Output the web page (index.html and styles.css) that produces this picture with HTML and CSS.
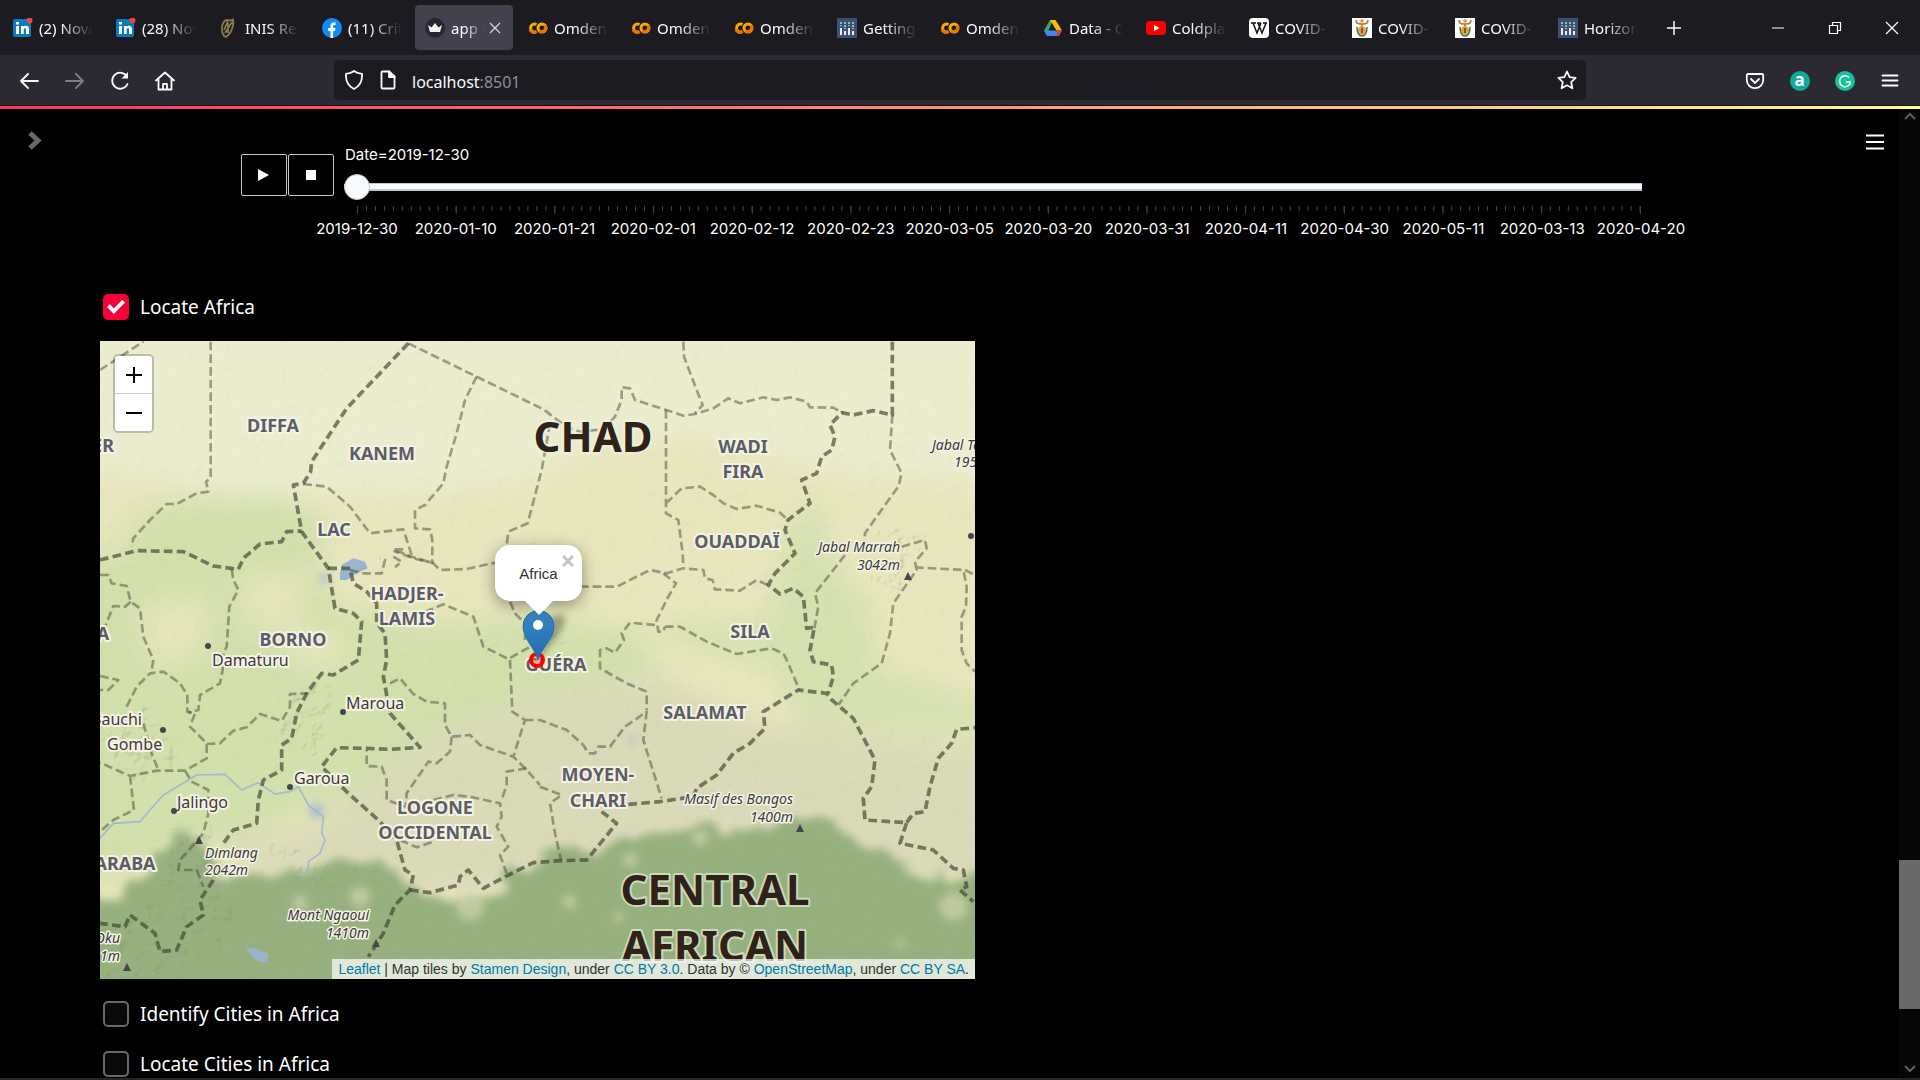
FILE: index.html
```html
<!DOCTYPE html>
<html lang="en">
<head>
<meta charset="utf-8">
<title>app · Streamlit</title>
<link rel="stylesheet" href="styles.css">
</head>
<body>
<svg class="defs" aria-hidden="true">
  <symbol id="i-linkedin" viewBox="0 0 20 20"><rect y="1" width="18" height="18" rx="2" fill="#0a7bbd"/><path d="M3 8h3v8H3zM3 4h3v2.500H3zM8 8h2.700v1.200C11.500 7.300 16 7 16 11v5h-3v-4.500c0-1.800-2.300-1.700-2.300 0V16H8z" fill="#fff"/><circle cx="16.500" cy="2.500" r="3" fill="#e8453c"/></symbol>
  <symbol id="i-harp" viewBox="0 0 20 20"><path d="M5 18C1 12 3 3 8 2c2 0 3 1.500 6-.5C15 7 13 15 7 19zM6 15 13 4M5 12l4-9M9 15V5" fill="none" stroke="#8d7a4c" stroke-width="1.800"/></symbol>
  <symbol id="i-facebook" viewBox="0 0 20 20"><circle cx="10" cy="10" r="10" fill="#0f8cf5"/><path d="M8.500 20v-7H6v-3h2.500V8c0-3 2-4 5-3.600V7c-2 0-2.400.2-2.400 1.500V10h2.400l-.5 3h-1.900v7z" fill="#fff"/></symbol>
  <symbol id="i-crown" viewBox="0 0 20 20"><circle cx="10" cy="10" r="10" fill="#262730"/><path d="m3 7 3.500 2.500L10 5l3.500 4.500L17 7l-2 7H5z" fill="#f2f2f2"/></symbol>
  <symbol id="i-colab" viewBox="0 0 20 20"><path d="M8.500 6.500a4 4 0 1 0 0 7" fill="none" stroke="#f9ab00" stroke-width="3"/><circle cx="14" cy="10" r="4" fill="none" stroke="#f9ab00" stroke-width="3"/><path d="M11.200 12.800a4 4 0 0 0 5.600-5.600M2 11.500A4 4 0 0 0 8.500 13.500" fill="none" stroke="#e8710a" stroke-width="3"/></symbol>
  <symbol id="i-plotly" viewBox="0 0 20 20"><path fill="#3f4f75" d="M0 0h20v20H0z"/><path d="M4 10v7M8 13v4M12 10v7M16 13v4" stroke="#e8ecf2" stroke-width="2"/><path d="M4 4v4M8 4v7M12 4v4M16 4v7" stroke="#7fc6b8" stroke-width="2" stroke-dasharray="2 1"/></symbol>
  <symbol id="i-drive" viewBox="0 0 20 20"><path fill="#34a853" d="M7 2h3l-6.500 15L1 12.500z"/><path fill="#fbbc04" d="M7 2h5.500L19 12.500h-5.500z"/><path fill="#4285f4" d="M1 12.500h12.500L15 18H4z"/><path fill="#ea4335" d="M13.500 12.500H19L16 18h-1z"/></symbol>
  <symbol id="i-youtube" viewBox="0 0 20 20"><rect y="3" width="20" height="14" rx="4" fill="#f00"/><path fill="#fff" d="m8 7 5.500 3L8 13z"/></symbol>
  <symbol id="i-wiki" viewBox="0 0 20 20"><rect width="20" height="20" rx="4" fill="#fff"/><path d="M2 5h5M8 5h4M14 5h4M4 5l4 10 4-10M9 5l4 10 4-10" fill="none" stroke="#111" stroke-width="1.500"/></symbol>
  <symbol id="i-arms" viewBox="0 0 20 20"><path fill="#fff" d="M0 0h20v20H0z"/><path d="M4 2c0 4 3 4 6 4s6 0 6-4M10 6v4" fill="none" stroke="#b07a30" stroke-width="1.600"/><circle cx="10" cy="3" r="1.800" fill="#f08a24"/><ellipse cx="10" cy="12.500" rx="4" ry="4.500" fill="#d9a441"/><path d="M5 9c0 7 2 9 5 9s5-2 5-9" fill="none" stroke="#3f7a45" stroke-width="1.500"/><path d="M9 10h2v5H9z" fill="#b5402c"/></symbol>
</svg>

<header class="browser">
  <div class="tabstrip">
    <div class="tab"><svg class="fav"><use href="#i-linkedin"/></svg><span class="tab-title">(2) Novat</span></div>
    <div class="tab"><svg class="fav"><use href="#i-linkedin"/></svg><span class="tab-title">(28) Nova</span></div>
    <div class="tab"><svg class="fav"><use href="#i-harp"/></svg><span class="tab-title">INIS Regi</span></div>
    <div class="tab"><svg class="fav"><use href="#i-facebook"/></svg><span class="tab-title">(11) Critic</span></div>
    <div class="tab tab-active"><svg class="fav"><use href="#i-crown"/></svg><span class="tab-title">app · St</span><button class="tab-close" aria-label="Close tab"><svg viewBox="0 0 12 12" width="12" height="12"><path d="m1 1 10 10M11 1 1 11" stroke="#d8d8dc" stroke-width="1.300"/></svg></button></div>
    <div class="tab"><svg class="fav"><use href="#i-colab"/></svg><span class="tab-title">Omdena</span></div>
    <div class="tab"><svg class="fav"><use href="#i-colab"/></svg><span class="tab-title">Omdena</span></div>
    <div class="tab"><svg class="fav"><use href="#i-colab"/></svg><span class="tab-title">Omdena</span></div>
    <div class="tab"><svg class="fav"><use href="#i-plotly"/></svg><span class="tab-title">Getting</span></div>
    <div class="tab"><svg class="fav"><use href="#i-colab"/></svg><span class="tab-title">Omdena</span></div>
    <div class="tab"><svg class="fav"><use href="#i-drive"/></svg><span class="tab-title">Data - Go</span></div>
    <div class="tab"><svg class="fav"><use href="#i-youtube"/></svg><span class="tab-title">Coldplay</span></div>
    <div class="tab"><svg class="fav"><use href="#i-wiki"/></svg><span class="tab-title">COVID-19</span></div>
    <div class="tab"><svg class="fav"><use href="#i-arms"/></svg><span class="tab-title">COVID-19</span></div>
    <div class="tab"><svg class="fav"><use href="#i-arms"/></svg><span class="tab-title">COVID-19</span></div>
    <div class="tab"><svg class="fav"><use href="#i-plotly"/></svg><span class="tab-title">Horizont</span></div>
    <button class="new-tab" aria-label="New tab"><svg viewBox="0 0 16 16" width="16" height="16"><path d="M8 1v14M1 8h14" stroke="#fbfbfe" stroke-width="1.500"/></svg></button>
    <div class="win">
      <button aria-label="Minimize"><svg viewBox="0 0 14 14" width="14" height="14"><path d="M1 7h12" stroke="#fff"/></svg></button>
      <button aria-label="Restore"><svg viewBox="0 0 14 14" width="14" height="14"><path d="M1.500 4.500h8v8h-8zM4.500 4V1.500h8v8H10" fill="none" stroke="#fff" stroke-width="1.200"/></svg></button>
      <button aria-label="Close window"><svg viewBox="0 0 14 14" width="14" height="14"><path d="m1 1 12 12M13 1 1 13" stroke="#fff" stroke-width="1.200"/></svg></button>
    </div>
  </div>
  <div class="toolbar">
    <button class="tool" aria-label="Back"><svg viewBox="0 0 20 20" width="20" height="20"><path d="M18 10H1m7-7-7 7 7 7"/></svg></button>
    <button class="tool tool-off" aria-label="Forward" disabled><svg viewBox="0 0 20 20" width="20" height="20"><path d="M1 10h17m-7-7 7 7-7 7"/></svg></button>
    <button class="tool" aria-label="Reload"><svg viewBox="0 0 20 20" width="20" height="20"><path d="M17.500 13A8 8 0 1 1 17 5.500"/><path d="M18 1v6.500h-6.500z" fill="#fbfbfe" stroke="none"/></svg></button>
    <button class="tool" aria-label="Home"><svg viewBox="0 0 20 20" width="20" height="20"><path d="m1 9.500 9-8 9 8M3.500 8v10.500h13V8M8 18v-5h4v5"/></svg></button>
    <div class="urlbar">
      <svg viewBox="0 0 20 20" width="20" height="20"><path d="M10 1c2.500 2 5 2.500 8 2.800C18.500 11 16 16 10 19 4 16 1.500 11 2 3.800 5 3.500 7.500 3 10 1z"/></svg>
      <svg viewBox="0 0 20 20" width="20" height="20"><path d="M3.500 2.500q0-1 1-1H11l5.500 5v11q0 1-1 1h-11q-1 0-1-1z"/><path d="M11 1.500V7h5.500z" fill="#fbfbfe"/></svg>
      <span class="url">localhost<span class="port">:8501</span></span>
      <button class="star" aria-label="Bookmark this page"><svg viewBox="0 0 20 20" width="20" height="20"><path d="m10 1.500 2.600 5.700 6 .7-4.400 4.200 1.200 6.200-5.400-3-5.400 3 1.200-6.200L1.400 7.900l6-.7z"/></svg></button>
    </div>
    <button class="tool" aria-label="Save to Pocket"><svg viewBox="0 0 20 20" width="20" height="20"><path d="M3 3h14q1.200 0 1.200 1.200V9a8.200 8.200 0 0 1-16.400 0V4.200Q1.800 3 3 3zM6 8l4 4 4-4"/></svg></button>
    <button class="tool" aria-label="Alexa extension"><span class="ext ext-a">a</span></button>
    <button class="tool" aria-label="Grammarly extension"><svg viewBox="0 0 20 20" width="20" height="20"><circle cx="10" cy="10" r="10" fill="#15c39a" stroke="none"/><path d="M13.500 6A5.500 5.500 0 1 0 15.500 11h-4" stroke-width="1.600"/></svg></button>
    <button class="tool" aria-label="Application menu"><svg viewBox="0 0 20 20" width="20" height="20"><path d="M2.500 4.500h15M2.500 9.500h15M2.500 14.500h15"/></svg></button>
  </div>
</header>
<div class="decoration"></div>

<div class="app">
  <div class="gutter"><button class="expand" aria-label="Open sidebar"><svg viewBox="0 0 14 20" width="14" height="20"><path d="m2 2 8 7.500L2 17" fill="none" stroke="#696969" stroke-width="5"/></svg></button></div>
  <main class="content">
    <section class="player">
      <div class="play-buttons">
        <button class="play" aria-label="Play"><svg viewBox="0 0 12 12" width="12" height="12"><path d="M0 0v12l11-6z" fill="#fff"/></svg></button>
        <button class="play" aria-label="Stop"><svg viewBox="0 0 12 12" width="12" height="12"><path d="M1 1h10v10H1z" fill="#fff"/></svg></button>
      </div>
      <div class="timeline">
        <label class="date" for="date">Date=2019-12-30</label>
        <input id="date" class="slider" type="range" min="0" max="143" value="0">
        <div class="ticks"></div>
        <div class="tick-labels">
          <span>2019-12-30</span><span>2020-01-10</span><span>2020-01-21</span><span>2020-02-01</span><span>2020-02-12</span><span>2020-02-23</span><span>2020-03-05</span><span>2020-03-20</span><span>2020-03-31</span><span>2020-04-11</span><span>2020-04-30</span><span>2020-05-11</span><span>2020-03-13</span><span>2020-04-20</span>
        </div>
      </div>
    </section>

    <label class="check"><input type="checkbox" checked>Locate Africa</label>

    <section class="map">
      <svg class="map-canvas" viewBox="0 0 875 638" preserveAspectRatio="xMidYMid slice" role="img" aria-label="Terrain map of Chad and its neighbours">
        <defs>
          <filter id="soft" x="-20%" y="-20%" width="140%" height="140%"><feGaussianBlur stdDeviation="38"/></filter>
          <filter id="edge" x="-10%" y="-20%" width="120%" height="140%"><feTurbulence type="fractalNoise" baseFrequency=".012" numOctaves="3" seed="4" result="n"/><feDisplacementMap in="SourceGraphic" in2="n" scale="110" xChannelSelector="R" yChannelSelector="G"/><feGaussianBlur stdDeviation="13"/></filter>
          <filter id="haze" x="-50%" y="-50%" width="200%" height="200%"><feGaussianBlur stdDeviation="12"/></filter>
          <filter id="relief" x="0" y="0" width="100%" height="100%"><feTurbulence type="fractalNoise" baseFrequency=".07" numOctaves="4" seed="9" result="n"/><feDiffuseLighting in="n" surfaceScale="3" lighting-color="#fff" result="l"><feDistantLight azimuth="225" elevation="50"/></feDiffuseLighting><feColorMatrix type="matrix" values="0 0 0 0 .2  0 0 0 0 .25  0 0 0 0 .15  -2.500 0 0 0 1.800"/><feComposite in2="SourceGraphic" operator="in"/></filter>
          <filter id="pin-shadow" x="-50%" y="-50%" width="200%" height="200%"><feGaussianBlur stdDeviation="3"/></filter>
          <linearGradient id="pin" x2="0" y2="1"><stop stop-color="#3a87c0"/><stop offset="1" stop-color="#1f6db4"/></linearGradient>
        </defs>
        <rect width="875" height="638" fill="#ecedcf"/>
        <g transform="translate(0 -1) scale(.33333)">
          <g filter="url(#soft)">
            <path fill="#e9e6bd" d="M-100 380 200 430 500 470 1000 460 1280 430 1500 310 1800 290 2200 400 2750 440V2000H-100z"/>
            <path fill="#d2e0ac" d="M-100 560 250 480 560 470 700 560 650 640 700 800 1000 850 1350 830 1600 880 1700 1000 1250 1080 900 1300 400 1500-100 1650z"/>
            <path fill="#e6e5bb" d="M-50 480 120 520 60 640-50 660zM430 700 620 700 600 860 430 860zM120 800 330 760 300 960 150 980zM560 860 760 880 700 1000 560 960z"/>
            <path fill="#d6e1b0" d="M1560 860 2000 840 2060 560 2150 460 2220 700 2300 760 2350 1050 1900 960zM2000 960 2280 960 2700 1100 2700 1180 2100 1160z"/>
            <path fill="#dbdab8" d="M900 1260 1020 1180 1320 1060 1700 1020 2000 1160 2700 1220V1650H1700L1000 1660 500 1620 350 1500 600 1480z"/>
          </g>
          <path filter="url(#edge)" fill="#97b17e" d="M-160 1690 0 1680 110 1640 218 1480 310 1480 350 1620 552 1600 700 1560 854 1550 887 1640 1088 1690 1180 1680 1239 1590 1440 1530 1560 1500 1674 1455 1900 1470 2176 1440 2344 1540 2500 1600 2800 1610V2090H-160z"/>
          <g filter="url(#haze)" fill="#dbdab8" opacity=".6"><circle cx="1110" cy="1700" r="42"/><circle cx="600" cy="1690" r="24"/><circle cx="780" cy="1670" r="30"/><circle cx="1408" cy="1685" r="20"/><circle cx="1555" cy="1733" r="14"/><circle cx="1590" cy="1560" r="22"/><circle cx="1800" cy="1493" r="24"/><circle cx="2560" cy="1700" r="42"/><circle cx="2440" cy="1570" r="36"/><circle cx="2400" cy="1810" r="14"/></g>
        </g>
        <g filter="url(#relief)" opacity=".28">
          <path d="M70 485 110 475 125 540 140 600 60 638H0V590L55 540zM165 500 200 510 195 530 170 515zM200 520 280 530 230 548 190 545zM195 350 235 340 220 420 175 400zM780 185 830 195 800 250 770 240zM430 290 465 285 462 320 440 330zM0 400 50 360 80 420 40 450z"/>
        </g>
        <rect filter="url(#relief)" opacity=".04" width="875" height="638"/>
        <g transform="translate(0 -1) scale(.33333)" fill="none" stroke-linejoin="round">
          <g fill="#9ab3cf"><path d="m720 700 5-25 35-20 35 10 8 20-33 15-30 20h-20zM435 1825l35 0 12 10 23 5-5 30-30-8z"/><g filter="url(#haze)" opacity=".7"><circle cx="672" cy="715" r="16"/><circle cx="650" cy="1412" r="24"/><circle cx="1597" cy="1200" r="12"/></g></g>
          <path stroke="#a3b9cd" stroke-width="5" d="M0 1495 40 1450 120 1445 150 1410 190 1365 290 1305 375 1303 425 1350 475 1328 525 1362 570 1355 595 1340 625 1395 670 1430 665 1480 675 1500 660 1540 625 1565V1595L595 1605"/>
          <g class="state-lines">
            <path d="M0 90 130 5M332 5V415L318 425 325 455 290 460 230 492 200 492 150 540 100 595 95 620"/>
            <path d="M925 10 1130 110 1320 203 1340 215 1400 262 1440 275 1510 268 1545 230 1565 180V142L1590 145 1605 180 1690 207 1750 227 1785 222 1840 205 1885 175 1920 190 1990 172 2030 180 2070 172 2120 185 2130 202 2200 203 2230 220"/>
            <path d="M1130 110 1095 180 1070 280 1040 380 1030 430 975 495 945 510V565L990 568 997 600V668L940 655 880 632M1350 250 1325 390 1283 550 1225 575 1220 615"/>
            <path d="M610 432 680 440 750 500 810 580 910 568 935 645M910 628H880L935 650 1000 670 1020 690 1100 687 1185 668M750 690 790 700H845L855 660 840 655M880 650 905 665 885 682"/>
            <path d="M0 705H25L35 730 80 738 92 785 120 805 130 890 160 960 155 990M92 785 75 800 40 798 15 860M395 688 400 720 415 750 388 800 380 920 370 940 368 990 360 1030 300 1065 295 1110 265 1118"/>
            <path d="M975 815 1030 793 1120 830 1150 920 1225 957 1290 920M1230 785 1245 820 1275 850V900M1750 5 1752 50 1790 150 1808 195 1785 220"/>
            <path d="M1698 210V520L1735 540 1748 640 1750 685M1698 490 1745 445 1800 440 1840 465 1870 490 1910 507 1970 497 2040 518 2064 540M1440 740H1550L1650 690 1700 700 1750 685 1810 690 1815 715 1838 720 1845 748 1920 752 1970 720 2010 738"/>
            <path d="M1690 700 1728 730 1705 770 1670 840 1675 875H1690L1695 860M1665 855 1590 848 1565 880 1572 900 1545 938 1520 925 1500 930V985L1580 1030 1640 1055V1110M1695 860H1740L1820 905 1910 942 2015 925 2050 940 2065 970 2098 1050"/>
            <path d="M2377 225 2370 330 2405 400 2395 440 2330 530 2295 580 2293 605M2235 645 2145 760 2155 800 2143 865M2405 620 2475 600 2480 625 2445 665 2450 690 2380 790 2370 880 2345 970 2260 1030 2215 1095M2445 682 2590 690 2600 740 2598 800 2585 830V930L2600 970 2625 995M2595 690 2625 705"/>
            <path d="M0 1008 55 1020 25 1050H0M80 1100 110 1040 150 1000 190 995 240 1030 262 1065V1115L285 1120 270 1160 320 1210V1255L255 1292H170L90 1308 0 1268M130 1150 155 1240 175 1290M90 1308 102 1410 40 1440 0 1475M320 1212 360 1210 400 1172 440 1162 480 1122 545 1143 570 1100V1062L625 1060M255 1292 275 1325 325 1350V1420L310 1480 240 1560 235 1590 290 1590 310 1640"/>
            <path d="M870 1030 900 1015 940 1062 980 1085 1035 1090V1155L1055 1190 1110 1185 1140 1215 1240 1250 1280 1290 1320 1335M1055 1190 1050 1235 1010 1270 985 1265 920 1360 918 1400 860 1380V1320L845 1280 800 1278V1230M1230 960 1237 1115 1275 1140 1240 1250M1275 1140H1320L1400 1170 1450 1215 1465 1240 1485 1240 1495 1220 1530 1220 1575 1160 1640 1115 1630 1200 1685 1375"/>
            <path d="M1280 1285 1220 1295V1335L1205 1380M1000 1380 1060 1365 1110 1370 1200 1390 1205 1430 1190 1460 1225 1520 1200 1545 1220 1600M900 1500 950 1522 1000 1505M1320 1340 1385 1365 1350 1390 1365 1480 1383 1560"/>
          </g>
          <g class="nation-lines">
            <path d="M925 10 740 205 635 365 632 395 610 430 580 435 605 575 685 685 705 805 760 820 785 845 775 960 700 1005 665 1000 620 1060 590 1120 575 1195 545 1215V1290L490 1320 475 1380 470 1450 400 1470 370 1510M340 1620 300 1680 310 1725 260 1760 230 1830 180 1835 165 1780 90 1725 75 1760 0 1750"/>
            <path d="M0 660 110 632 250 635 340 678 415 688 430 655 480 612 545 605 560 575 605 573M685 685H750L760 730 800 755 830 790V850L855 880 860 960 850 1010 870 1120 960 1222 870 1228 790 1225 710 1223 665 1280 740 1355 840 1445 890 1500 915 1590 940 1605 930 1650 885 1695 850 1780 805 1850"/>
            <path d="M930 1650 990 1658 1075 1635 1080 1610 1105 1590 1150 1645 1225 1605 1300 1568 1380 1562 1460 1560 1550 1450 1505 1415M1585 1393 1680 1385 1780 1370 1790 1345 1850 1305 1900 1240 1950 1210 1995 1165 1990 1115 2095 1050 2180 1060 2190 1075 2260 1135 2325 1260 2315 1340 2290 1375 2295 1440 2420 1448 2400 1510 2500 1530 2560 1585 2590 1590 2600 1640 2580 1650 2620 1685"/>
            <path d="M2377 5V225L2320 212 2260 225 2225 218 2190 255 2205 290 2195 330 2165 350 2150 400 2105 420 2130 490 2064 540 2055 570 2085 640 2025 700 2005 735 2040 762 2080 745 2110 770 2120 865 2143 862 2130 930 2140 965 2195 975 2200 1010 2185 1060M2420 1448 2440 1420 2475 1415 2490 1340 2515 1255 2555 1210 2570 1168 2625 1163"/>
          </g>
        </g>
        <g class="region">
          <text x="173" y="91">DIFFA</text><text x="282" y="119">KANEM</text><text x="234" y="195">LAC</text>
          <text x="643" y="112">WADI</text><text x="643" y="137">FIRA</text><text x="637" y="207">OUADDAÏ</text><text x="650" y="297">SILA</text>
          <text x="307" y="259">HADJER-</text><text x="307" y="284">LAMIS</text><text x="193" y="305">BORNO</text><text x="456" y="330">GUÉRA</text>
          <text x="605" y="378">SALAMAT</text><text x="498" y="440">MOYEN-</text><text x="498" y="466">CHARI</text>
          <text x="335" y="473">LOGONE</text><text x="335" y="498">OCCIDENTAL</text>
          <text x="3" y="111">ER</text><text x="3" y="299">A</text><text x="25" y="529">ARABA</text>
        </g>
        <g class="country"><text x="493" y="111">CHAD</text><text x="615" y="564">CENTRAL</text><text x="615" y="620">AFRICAN</text></g>
        <g class="city">
          <text x="112" y="325">Damaturu</text><text x="246" y="368">Maroua</text><text x="-9" y="384">Bauchi</text><text x="7" y="409">Gombe</text><text x="194" y="443">Garoua</text><text x="77" y="467">Jalingo</text>
        </g>
        <g class="peak">
          <text x="832" y="109">Jabal Teljo</text><text x="854" y="126">1954m</text>
          <text class="end" x="800" y="211">Jabal Marrah</text><text class="end" x="800" y="229">3042m</text>
          <text class="end" x="693" y="463">Masif des Bongos</text><text class="end" x="693" y="481">1400m</text>
          <text x="105" y="517">Dimlang</text><text x="105" y="534">2042m</text>
          <text class="end" x="269" y="579">Mont Ngaoui</text><text class="end" x="269" y="597">1410m</text>
          <text class="end" x="20" y="602">Oku</text><text class="end" x="20" y="620">1m</text>
        </g>
        <g fill="#46464a"><circle cx="108" cy="305" r="3"/><circle cx="243" cy="371" r="3"/><circle cx="63" cy="389" r="3"/><circle cx="190" cy="446" r="3"/><circle cx="74" cy="470" r="3"/><circle cx="871" cy="195" r="3"/><path d="m808 231 4 8h-8zM700 483l4 8h-8zM99 495l4 8h-8zM276 598l4 8h-8zM27 622l4 8h-8z"/></g>
        <path d="m440 318 20-27q8-12 4-16-14-4-22 15z" fill="#000" opacity=".3" filter="url(#pin-shadow)"/>
        <circle cx="437" cy="319" r="6" fill="#f66" fill-opacity=".5" stroke="#f00" stroke-width="4"/>
        <path d="M438 319c-3-12-15-21-15-34a15 15 0 0 1 31 0c0 13-13 22-16 34z" fill="url(#pin)" stroke="#2a6ea4"/>
        <circle cx="438" cy="284" r="5" fill="#fff"/>
      </svg>
      <div class="zoom"><button aria-label="Zoom in"><svg viewBox="0 0 16 16" width="16" height="16"><path d="M8 0v16M0 8h16" stroke="#000" stroke-width="2"/></svg></button><button aria-label="Zoom out"><svg viewBox="0 0 16 16" width="16" height="16"><path d="M0 8h16" stroke="#000" stroke-width="2"/></svg></button></div>
      <div class="popup">Africa<button class="popup-close" aria-label="Close popup"><svg viewBox="0 0 12 12" width="12" height="12"><path d="m1 1 10 10M11 1 1 11" stroke="#c3c3c3" stroke-width="3"/></svg></button></div>
      <div class="attribution"><a href="#">Leaflet</a> | Map tiles by <a href="#">Stamen Design</a>, under <a href="#">CC BY 3.0</a>. Data by © <a href="#">OpenStreetMap</a>, under <a href="#">CC BY SA</a>.</div>
    </section>

    <label class="check"><input type="checkbox">Identify Cities in Africa</label>
    <label class="check"><input type="checkbox">Locate Cities in Africa</label>
  </main>
  <div class="gutter gutter-end"><button class="menu" aria-label="Menu"><svg viewBox="0 0 18 16" width="18" height="16"><path d="M0 1.500h18M0 8h18M0 14.500h18" stroke="#fff" stroke-width="2"/></svg></button></div>
  <div class="scrollbar">
    <svg viewBox="0 0 12 8" width="12" height="8"><path d="m1 7 5-5 5 5" fill="none" stroke="#606060" stroke-width="2"/></svg>
    <div class="track"><div class="thumb"></div></div>
    <svg viewBox="0 0 12 8" width="12" height="8"><path d="m1 1 5 5 5-5" fill="none" stroke="#606060" stroke-width="2"/></svg>
  </div>
</div>
</body>
</html>
```
FILE: styles.css
```css
* { box-sizing: border-box; }

body {
  margin: 0;
  height: 100vh;
  display: flex;
  flex-direction: column;
  overflow: hidden;
  background: #000;
  color: #fff;
  font-family: Inter, "Noto Sans", sans-serif;
  font-size: 15px;
}

button {
  display: flex;
  align-items: center;
  justify-content: center;
  padding: 0;
  border: 0;
  background: none;
  color: inherit;
  font: inherit;
}

.defs { display: none; }

/* Browser window */
.browser { font-family: "Noto Sans", "Open Sans", sans-serif; color: #fbfbfe; }

.tabstrip {
  display: flex;
  align-items: center;
  height: 55px;
  padding-left: 3px;
  background: #1c1b22;
}

.tab {
  display: flex;
  align-items: center;
  flex: 0 1 98px;
  min-width: 0;
  height: 45px;
  margin-right: 5px;
  padding: 0 8px 0 10px;
  border-radius: 4px;
  font-size: 15px;
}

.tab-active { background: #42414d; }
.fav { flex: none; width: 20px; height: 20px; margin-right: 6px; }

.tab-title {
  flex: 1;
  min-width: 0;
  overflow: hidden;
  white-space: nowrap;
  -webkit-mask-image: linear-gradient(to right, #000 40%, transparent);
  mask-image: linear-gradient(to right, #000 40%, transparent);
}

.tab-close { width: 20px; height: 20px; }
.new-tab { width: 46px; height: 45px; }
.win { display: flex; margin-left: auto; }
.win button { width: 57px; height: 55px; }

.toolbar {
  display: flex;
  align-items: center;
  height: 50px;
  padding: 0 8px 0 7px;
  background: #2b2a33;
}

.tool { width: 45px; height: 40px; padding-top: 2px; }
.tool-off { opacity: .4; }

.tool svg,
.urlbar svg { fill: none; stroke: #fbfbfe; stroke-width: 1.8px; stroke-linecap: round; stroke-linejoin: round; }

.ext { width: 20px; height: 20px; border-radius: 50%; background: #0fa99d; font-size: 17px; font-weight: 700; line-height: 18px; }

.urlbar {
  display: flex;
  flex: 1;
  align-items: center;
  gap: 14px;
  height: 40px;
  margin: 0 146px 0 147px;
  padding: 0 9px 0 10px;
  border-radius: 5px;
  background: #1c1b22;
}

.url { flex: 1; padding-top: 3px; font-size: 16px; }
.port { color: #8f8f9d; }

.decoration {
  flex: none;
  height: 4px;
  border-top: 1px solid #111016;
  background: linear-gradient(to right, #ff3366, #ff6f6f 35%, #ffc07a 70%, #fffd80);
}

/* App */
.app {
  display: flex;
  flex: 1;
  min-height: 0;
  overflow: hidden;
  border-bottom: 2px solid #252427;
}

.gutter { flex: none; width: 100px; padding: 22px 0 0 28px; }
.gutter-end { display: flex; align-items: start; justify-content: end; padding: 25px 15px 0 0; }
.content { flex: 1; min-width: 0; }

.player { display: flex; gap: 10px; padding: 36px 157px 0 141px; margin-bottom: 55px; }
.play-buttons { display: flex; gap: 1px; padding-top: 9px; }
.play { width: 46px; height: 42px; border: 1px solid #bec8d9; border-radius: 2px; }
.timeline { flex: 1; min-width: 0; line-height: 20px; }
.date { display: block; margin-bottom: 9px; padding-left: 1px; }

.slider {
  appearance: none;
  display: block;
  width: 100%;
  height: 26px;
  margin: 0 0 6px;
  background: linear-gradient(#bec8d9, #bec8d9) 3px 9px / 100% 8px no-repeat;
}

.slider::-webkit-slider-runnable-track {
  height: 26px;
  background: linear-gradient(#f8fafc, #f8fafc) 0 10px / 100% 5px no-repeat;
}

.slider::-webkit-slider-thumb {
  appearance: none;
  width: 26px;
  height: 26px;
  border: 1px solid #bec8d9;
  border-radius: 50%;
  background: #f8fafc;
}

.ticks {
  height: 8px;
  margin: 0 1px 5px 13px;
  background:
    linear-gradient(to right, #444 1px, transparent 1px) 0 0 / calc((100% - 1px) / 13) 8px repeat-x,
    linear-gradient(to right, #444 1px, transparent 1px) 0 0 / calc((100% - 1px) / 143) 5px repeat-x;
}

.tick-labels { display: flex; justify-content: space-between; margin: 0 1px 0 13px; white-space: nowrap; }
.tick-labels span { display: flex; justify-content: center; width: 0; }

.check {
  display: flex;
  align-items: center;
  gap: 11px;
  width: fit-content;
  height: 26px;
  margin: 0 0 24px 3px;
  font-family: "Noto Sans", sans-serif;
  font-size: 19px;
  line-height: 26px;
}

.check input {
  appearance: none;
  width: 26px;
  height: 26px;
  margin: 0;
  border: 2px solid #696969;
  border-radius: 5px;
  background: #0a0a0a;
}

.check input:checked { border: 0; background: #f80038; }

.check input:checked::before {
  content: "";
  display: block;
  width: 18px;
  height: 14px;
  margin: 6px 4px;
  background: #fff;
  clip-path: polygon(0 50%, 16% 30%, 38% 60%, 84% 0, 100% 18%, 38% 100%);
}

/* Map */
.map {
  position: relative;
  width: 875px;
  max-width: 100%;
  height: 638px;
  margin: -3px 0 22px;
  overflow: hidden;
  font-family: "Liberation Sans", Arial, sans-serif;
  color: #333;
}

.map-canvas { display: block; width: 100%; height: 100%; }
.state-lines { stroke: #4a4a3c; stroke-width: 8px; stroke-opacity: .5; stroke-dasharray: 26 12; }
.nation-lines { stroke: #3c3f30; stroke-width: 11px; stroke-opacity: .65; stroke-dasharray: 26 13; }
.map text { paint-order: stroke; stroke: #f4f3e4; stroke-width: 4px; stroke-linejoin: round; font-family: "Noto Sans", sans-serif; }
.map .region text { fill: #5d5d66; font-size: 18px; font-weight: 700; text-anchor: middle; }
.map .country text { fill: #2f2218; stroke-opacity: .6; font-size: 42px; font-weight: 700; text-anchor: middle; }
.map .city text { fill: #42383c; font-size: 16px; }
.map .peak text { fill: #3a3a40; stroke-width: 3px; font-size: 14px; font-style: italic; }
.map .peak .end { text-anchor: end; }

.zoom {
  position: absolute;
  top: 13px;
  left: 13px;
  border: 2px solid rgba(0, 0, 0, .2);
  border-radius: 5px;
  background-clip: padding-box;
}

.zoom button { width: 37px; height: 37px; background: #fff; }
.zoom button:first-child { height: 38px; border-bottom: 1px solid #ccc; border-radius: 3px 3px 0 0; }
.zoom button:last-child { border-radius: 0 0 3px 3px; }

.popup {
  position: absolute;
  top: 204px;
  left: 395px;
  width: 87px;
  height: 56px;
  border-radius: 15px;
  background: #fff;
  box-shadow: 0 4px 16px rgba(0, 0, 0, .4);
  font-size: 15px;
  line-height: 58px;
  text-align: center;
}

.popup::after {
  content: "";
  position: absolute;
  top: 100%;
  left: 30px;
  width: 28px;
  height: 14px;
  background: #fff;
  clip-path: polygon(0 0, 100% 0, 50% 100%);
}

.popup-close { position: absolute; top: 10px; right: 8px; }

.attribution {
  position: absolute;
  right: 0;
  bottom: 0;
  padding: 0 6px;
  background: rgba(255, 255, 255, .7);
  font-size: 14px;
  line-height: 20px;
  white-space: nowrap;
}

.attribution a { color: #0078a8; text-decoration: none; }

/* Page scrollbar */
.scrollbar {
  display: flex;
  flex: none;
  flex-direction: column;
  align-items: center;
  gap: 10px;
  width: 21px;
  padding: 3px 0 5px;
  background: #060608;
}

.track { display: flex; flex: 1; flex-direction: column; justify-content: end; width: 100%; padding-bottom: 46px; }
.thumb { height: 17%; background: #696969; }
```
